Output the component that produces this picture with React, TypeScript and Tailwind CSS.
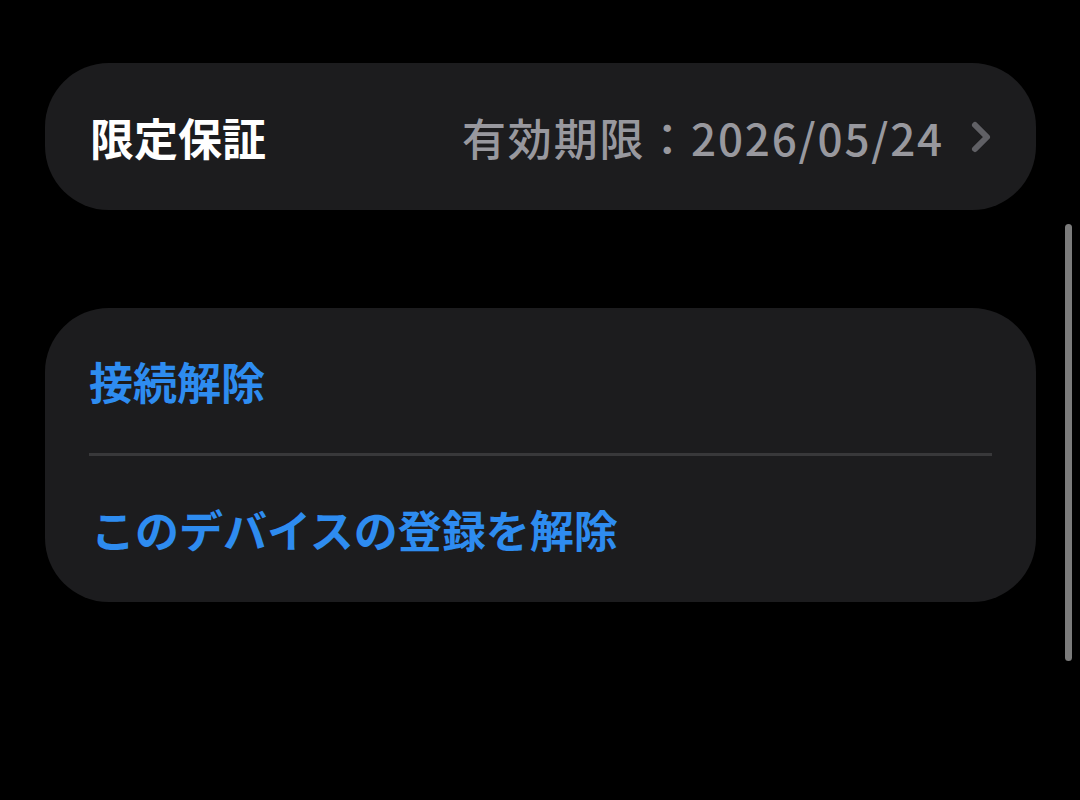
import React from 'react';

const font = { fontFamily: '"Noto Sans CJK JP", "Noto Sans", sans-serif' };

const ChevronRight = () => (
  <svg width="26" height="36" viewBox="0 0 26 36" fill="none">
    <path d="M7 6 L19 18 L7 30" stroke="#606065" strokeWidth="6" strokeLinecap="round" strokeLinejoin="round" />
  </svg>
);

export default function App() {
  return (
    <div className="relative w-[1080px] h-[800px] bg-black overflow-hidden" style={font}>
      <div className="flex flex-col pt-[63px] pl-[45px] pr-[44px] gap-[98px]">
        {/* 保証 */}
        <div className="h-[147px] rounded-[64px] bg-[#1c1c1e] flex items-center pl-[45px] pr-[42px]">
          <span className="text-[44px] font-bold text-white leading-none">限定保証</span>
          <div className="ml-auto flex items-center gap-[24px]">
            <span className="text-[44px] font-medium tracking-[1.8px] text-[#98989e] leading-none">有効期限：2026/05/24</span>
            <ChevronRight />
          </div>
        </div>

        {/* アクション */}
        <div className="rounded-[64px] bg-[#1c1c1e] pl-[44px] pr-[44px]">
          <div className="h-[145px] flex items-center">
            <span className="text-[44px] font-bold text-[#2e8cf0] leading-none">接続解除</span>
          </div>
          <div className="h-[3px] bg-[#38383a]" />
          <div className="h-[146px] flex items-center pl-[2px]">
            <span className="text-[44px] font-bold text-[#2e8cf0] leading-none">このデバイスの登録を解除</span>
          </div>
        </div>
      </div>

      {/* scroll indicator */}
      <div className="absolute left-[1065px] top-[224px] w-[7px] h-[437px] rounded-full bg-[#7b7b7b]" />
    </div>
  );
}
